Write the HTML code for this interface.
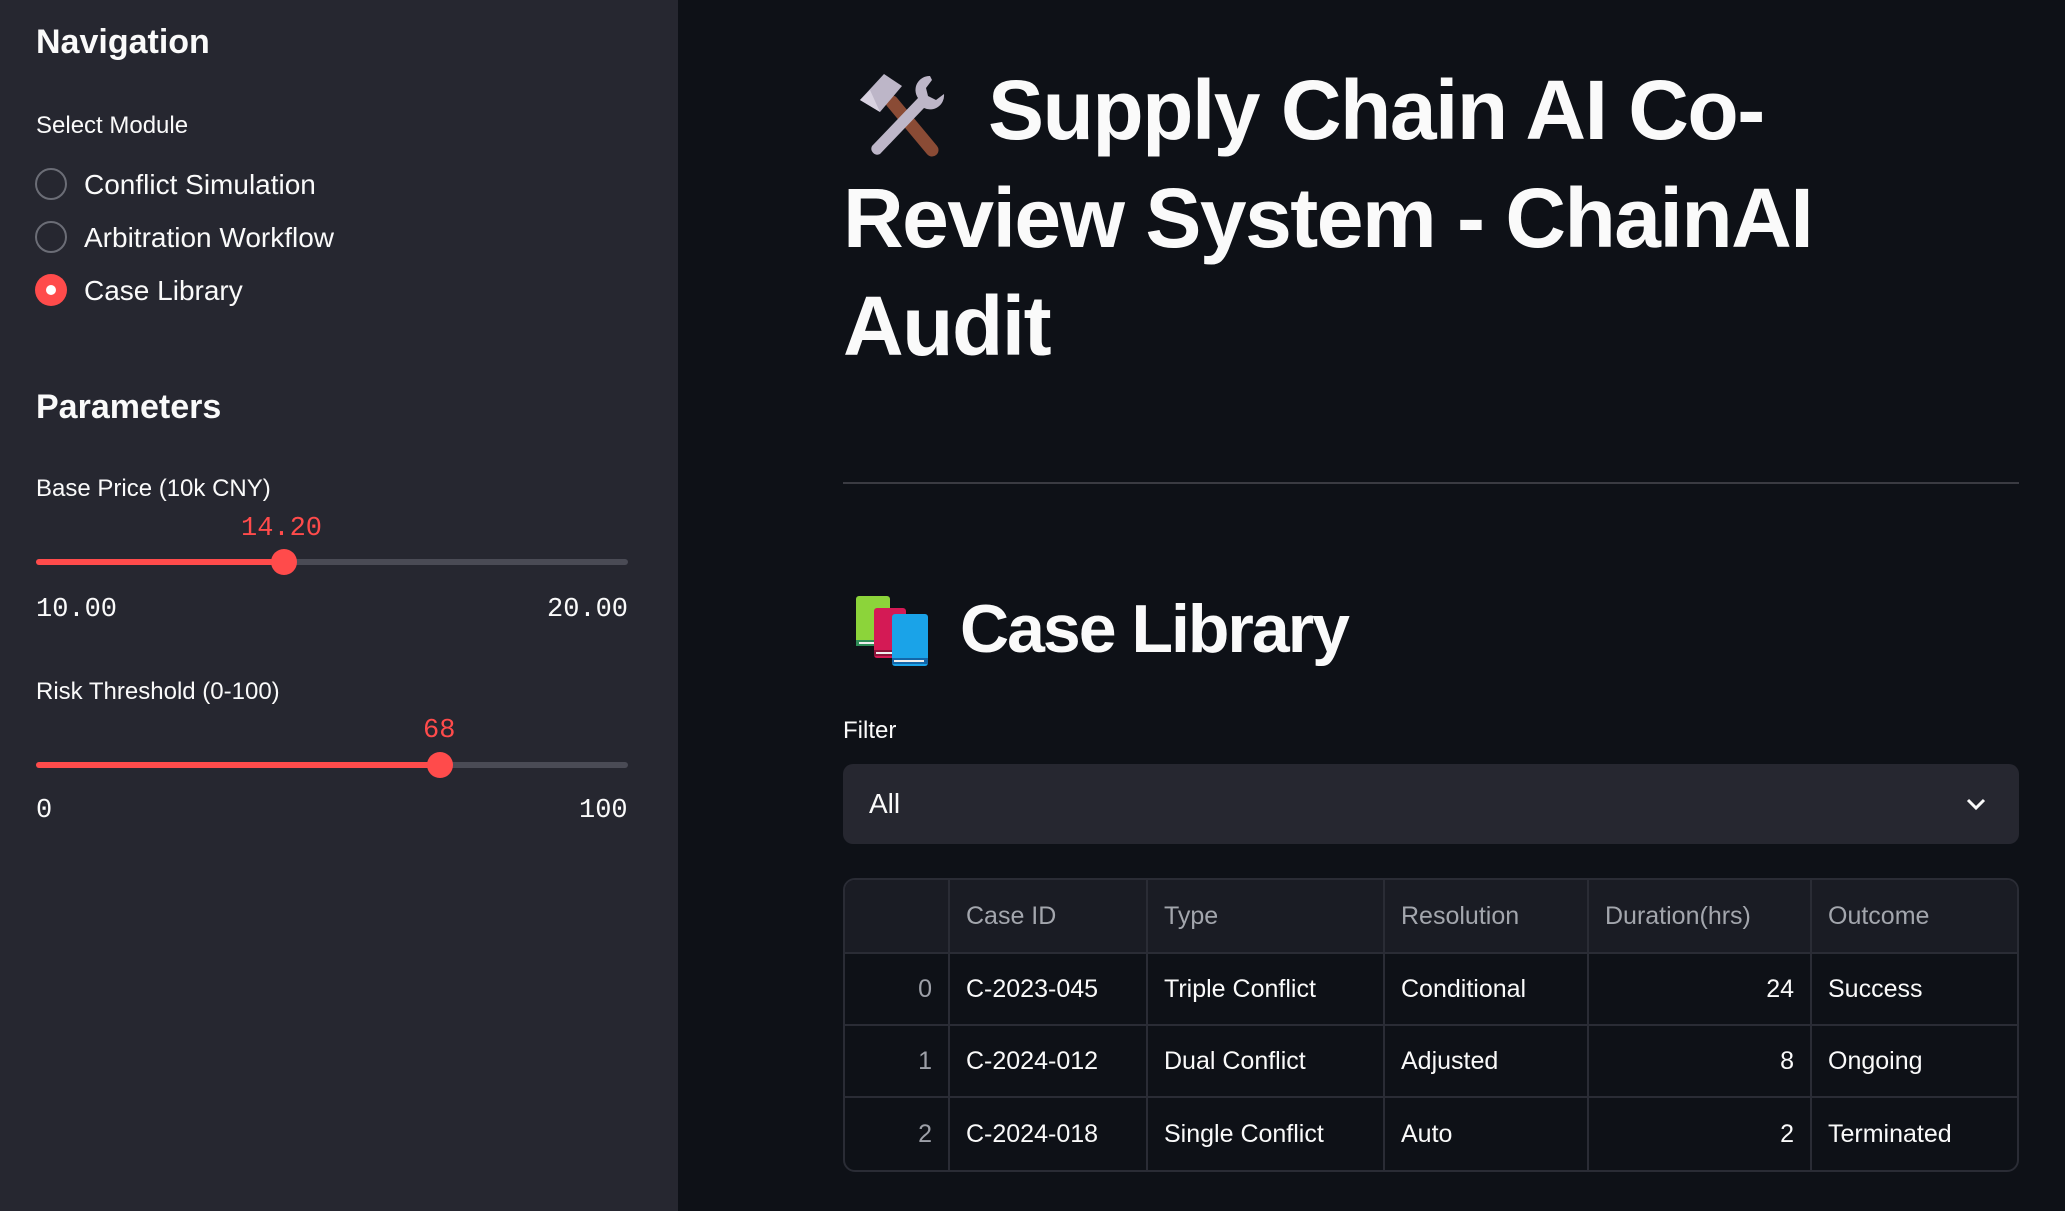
<!DOCTYPE html>
<html><head><meta charset="utf-8"><style>
*{margin:0;padding:0;box-sizing:border-box}
body{width:2065px;height:1211px;background:#0e1117;font-family:"Liberation Sans",sans-serif;color:#fafafa;position:relative;overflow:hidden}
.sb{position:absolute;left:0;top:0;width:678px;height:1211px;background:#262730}
.a{position:absolute;white-space:nowrap}
.h{font-weight:bold;font-size:34px}
.lbl{font-size:24px}
.radio{position:absolute;width:32px;height:32px;border-radius:50%;border:2px solid #6b6d76}
.rl{font-size:28px}
.mono{font-family:"Liberation Mono",monospace;font-size:27px}
.track{position:absolute;left:36px;width:592px;height:6px;border-radius:3px;background:#4a4b55}
.fill{position:absolute;left:0;top:0;height:6px;border-radius:3px;background:#ff4b4b}
.thumb{position:absolute;width:26px;height:26px;border-radius:50%;background:#ff4b4b;top:-10px}
.t1{font-weight:bold;font-size:84px;letter-spacing:-1.5px}
table{position:absolute;left:843px;top:878px;width:1176px;border-collapse:separate;border-spacing:0;border:2px solid #2a2c35;border-radius:12px;overflow:hidden;font-size:25px}
td,th{border-right:2px solid #2a2c35;border-bottom:2px solid #2a2c35;padding:0 16px;height:72px;text-align:left;font-weight:normal}
th{background:#1a1c24;color:#a3a6ad;height:74px}
tr td:last-child,tr th:last-child{border-right:none}
tr:last-child td{border-bottom:none}
.r{text-align:right}
.ix{color:#9da0a8;text-align:right}
</style></head><body>
<div class="sb">
<div class="a h" style="left:36px;top:23px">Navigation</div>
<div class="a lbl" style="left:36px;top:112px">Select Module</div>
<div class="radio" style="left:35px;top:168px"></div>
<div class="a rl" style="left:84px;top:169px">Conflict Simulation</div>
<div class="radio" style="left:35px;top:221px"></div>
<div class="a rl" style="left:84px;top:222px">Arbitration Workflow</div>
<div class="radio" style="left:35px;top:274px;border:none;background:#ff4b4b"><div style="position:absolute;left:11px;top:11px;width:10px;height:10px;border-radius:50%;background:#fff"></div></div>
<div class="a rl" style="left:84px;top:275px">Case Library</div>
<div class="a h" style="left:36px;top:388px">Parameters</div>
<div class="a lbl" style="left:36px;top:475px">Base Price (10k CNY)</div>
<div class="a mono" style="left:241px;top:514px;color:#ff4b4b">14.20</div>
<div class="track" style="top:559px"><div class="fill" style="width:248px"></div><div class="thumb" style="left:235px"></div></div>
<div class="a mono" style="left:36px;top:595px">10.00</div>
<div class="a mono" style="left:547px;top:595px">20.00</div>
<div class="a lbl" style="left:36px;top:678px">Risk Threshold (0-100)</div>
<div class="a mono" style="left:423px;top:716px;color:#ff4b4b">68</div>
<div class="track" style="top:762px"><div class="fill" style="width:404px"></div><div class="thumb" style="left:391px"></div></div>
<div class="a mono" style="left:36px;top:796px">0</div>
<div class="a mono" style="left:579px;top:796px">100</div>
</div>

<svg class="a" style="left:856px;top:70px" width="92" height="88" viewBox="0 0 92 88">
<path d="M36 32 L76 80" stroke="#8a4b35" stroke-width="13" stroke-linecap="round"/>
<path d="M4 30 L28 4 L46 16 L24 42 Z" fill="#bdb6c8"/>
<path d="M4 30 L14 20 L24 42 Z" fill="#d8d2e0"/>
<path d="M74 6 a14 14 0 0 0 -12 22 L16 76 a6 6 0 0 0 8 8 L68 38 a14 14 0 0 0 20 -14 l-8 6 l-8 -4 l-2 -8 l6 -8 z" fill="#bdb6c8"/>
</svg>
<div class="a t1" style="left:988px;top:62px">Supply Chain AI Co-</div>
<div class="a t1" style="left:843px;top:170px">Review System - ChainAI</div>
<div class="a t1" style="left:843px;top:278px">Audit</div>
<div class="a" style="left:843px;top:482px;width:1176px;height:2px;background:#3a3b42"></div>

<svg class="a" style="left:856px;top:596px" width="78" height="70" viewBox="0 0 78 70">
<rect x="0" y="0" width="34" height="50" rx="3" fill="#8cd43a"/><rect x="0" y="44" width="34" height="6" fill="#2e8b57"/><rect x="3" y="46" width="28" height="2" fill="#eee"/>
<rect x="18" y="12" width="32" height="50" rx="3" fill="#d41a55"/><rect x="18" y="54" width="32" height="6" fill="#8a1438"/><rect x="20" y="56" width="26" height="2" fill="#eee"/>
<rect x="36" y="18" width="36" height="52" rx="3" fill="#1aa3e8"/><rect x="36" y="62" width="36" height="6" fill="#1366a8"/><rect x="38" y="64" width="30" height="2" fill="#eee"/>
</svg>
<div class="a" style="left:960px;top:590px;font-size:68px;font-weight:bold;letter-spacing:-2px">Case Library</div>
<div class="a lbl" style="left:843px;top:717px">Filter</div>
<div class="a" style="left:843px;top:764px;width:1176px;height:80px;background:#262730;border-radius:10px">
<div class="a" style="left:26px;top:24px;font-size:28px">All</div>
<svg class="a" style="left:1122px;top:30px" width="22" height="20" viewBox="0 0 22 20"><path d="M3 6 L11 14 L19 6" stroke="#fafafa" stroke-width="3" fill="none"/></svg>
</div>
<table>
<colgroup><col style="width:105px"><col style="width:198px"><col style="width:237px"><col style="width:204px"><col style="width:223px"><col></colgroup>
<tr><th></th><th>Case ID</th><th>Type</th><th>Resolution</th><th>Duration(hrs)</th><th>Outcome</th></tr>
<tr><td class="ix">0</td><td>C-2023-045</td><td>Triple Conflict</td><td>Conditional</td><td class="r">24</td><td>Success</td></tr>
<tr><td class="ix">1</td><td>C-2024-012</td><td>Dual Conflict</td><td>Adjusted</td><td class="r">8</td><td>Ongoing</td></tr>
<tr><td class="ix">2</td><td>C-2024-018</td><td>Single Conflict</td><td>Auto</td><td class="r">2</td><td>Terminated</td></tr>
</table>
</body></html>
